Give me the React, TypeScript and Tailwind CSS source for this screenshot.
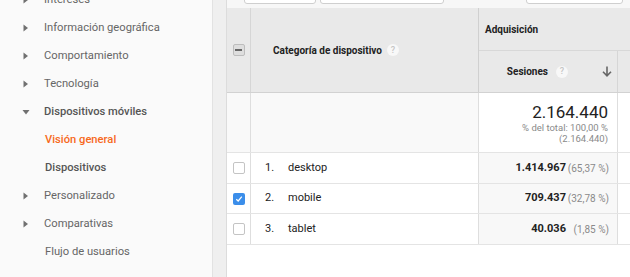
import type React from "react";

const navItems: Array<{ label: string; kind: "closed" | "open" | "sub" | "active" | "plain" }> = [
  { label: "Intereses", kind: "closed" },
  { label: "Información geográfica", kind: "closed" },
  { label: "Comportamiento", kind: "closed" },
  { label: "Tecnología", kind: "closed" },
  { label: "Dispositivos móviles", kind: "open" },
  { label: "Visión general", kind: "active" },
  { label: "Dispositivos", kind: "sub" },
  { label: "Personalizado", kind: "closed" },
  { label: "Comparativas", kind: "closed" },
  { label: "Flujo de usuarios", kind: "plain" },
];

const rows = [
  { n: "1.", name: "desktop", value: "1.414.967", pct: "(65,37 %)", checked: false, h: "h-[31px]" },
  { n: "2.", name: "mobile", value: "709.437", pct: "(32,78 %)", checked: true, h: "h-[30px]" },
  { n: "3.", name: "tablet", value: "40.036", pct: "(1,85 %)", checked: false, h: "h-[31px]" },
];

const Caret: React.FC<{ open?: boolean }> = ({ open }) => (
  <svg width="8" height="8" viewBox="0 0 8 8" className="text-[#707070]">
    {open ? <path d="M0.5 2 L7.5 2 L4 6.5 Z" fill="currentColor" /> : <path d="M1.5 0.5 L6 4 L1.5 7.5 Z" fill="currentColor" />}
  </svg>
);

const HelpIcon: React.FC = () => (
  <span className="inline-flex h-[12px] w-[12px] items-center justify-center rounded-full bg-[#f8f8f8] text-[9px] font-medium leading-none text-[#c4c4c4]">
    ?
  </span>
);

const Checkbox: React.FC<{ checked?: boolean }> = ({ checked }) =>
  checked ? (
    <span className="flex h-[12px] w-[12px] items-center justify-center rounded-[2px] bg-[#3b8eea]">
      <svg width="8" height="8" viewBox="0 0 8 8">
        <path d="M1.3 4.2 L3.2 6 L6.8 1.6" fill="none" stroke="#fff" strokeWidth="1.2" />
      </svg>
    </span>
  ) : (
    <span className="block h-[12px] w-[12px] rounded-[2px] border border-[#c4c4c4] bg-white" />
  );

export default function App() {
  return (
    <div className="flex h-[277px] w-[630px] overflow-hidden bg-white font-['Roboto','Liberation_Sans',sans-serif]">
      {/* navegación lateral */}
      <aside className="w-[213px] shrink-0 border-r border-[#e2e2e2] bg-[#fafafa]">
        <ul className="-mt-[14px]">
          {navItems.map((item) => (
            <li key={item.label} className="flex h-[28px] items-center">
              <span className="flex w-[44px] justify-end pr-[14px]">
                {item.kind === "closed" && <Caret />}
                {item.kind === "open" && <Caret open />}
              </span>
              <span
                className={`text-[11.2px] ${
                  item.kind === "active"
                    ? "pl-[1px] font-medium text-[#f7691c]"
                    : item.kind === "sub"
                      ? "pl-[1px] font-medium text-[#555]"
                      : item.kind === "open"
                        ? "font-medium text-[#555]"
                        : item.kind === "plain"
                          ? "pl-[1px] text-[#666]"
                          : "text-[#666]"
                }`}
              >
                {item.label}
              </span>
            </li>
          ))}
        </ul>
      </aside>
      <div className="w-[14px] shrink-0 border-r border-[#dcdcdc] bg-[#efefef]" />

      <main className="min-w-0 flex-1 overflow-hidden bg-white">
        {/* barra superior con botones recortados */}
        <div className="flex h-[8px] items-end overflow-hidden bg-[#f7f7f7] pb-[4px]">
          <div className="ml-[17px] h-[20px] w-[72px] shrink-0 rounded-[3px] border border-[#cfcfcf] bg-white" />
          <div className="ml-[4px] h-[20px] w-[124px] shrink-0 rounded-[3px] border border-[#cfcfcf] bg-white" />
          <div className="ml-[82px] h-[20px] w-[97px] shrink-0 rounded-[3px] border border-[#cfcfcf] bg-white" />
        </div>

        {/* cabecera de la tabla */}
        <div className="flex h-[85px] w-[420px] border-b border-[#d2d2d2] bg-[#e9e9e9]">
          <div className="flex w-[24px] shrink-0 items-center justify-center border-r border-[#d6d6d6]">
            <span className="flex h-[12px] w-[12px] items-center justify-center rounded-[2px] border border-[#bdbdbd] bg-[#dedede]">
              <span className="block h-[2px] w-[7px] bg-[#666]" />
            </span>
          </div>
          <div className="flex w-[228px] shrink-0 items-center gap-[5px] border-r border-[#d0d0d0] pl-[22px]">
            <span className="text-[10px] font-bold text-[#222]">Categoría de dispositivo</span>
            <HelpIcon />
          </div>
          <div className="flex min-w-0 flex-1 flex-col">
            <div className="flex h-[43px] items-center border-b border-[#d8d8d8] pl-[6px]">
              <span className="text-[10px] font-bold text-[#222]">Adquisición</span>
            </div>
            <div className="flex flex-1">
              <div className="flex w-[139px] shrink-0 items-center justify-end border-r border-[#d6d6d6] pr-[5px]">
                <span className="text-[10px] font-bold text-[#222]">Sesiones</span>
                <span className="ml-[8px] flex">
                  <HelpIcon />
                </span>
                <svg width="10" height="11" viewBox="0 0 10 11" className="ml-[34px]">
                  <path d="M5 0.5 V9.5 M1 5.8 L5 9.8 L9 5.8" fill="none" stroke="#666" strokeWidth="1.6" />
                </svg>
              </div>
              <div className="flex-1" />
            </div>
          </div>
        </div>

        {/* fila de totales */}
        <div className="flex h-[60px] w-[420px] border-b border-[#e4e4e4]">
          <div className="w-[24px] shrink-0 border-r border-[#dedede] bg-[#f9f9f9]" />
          <div className="w-[228px] shrink-0 border-r border-[#dedede] bg-[#f9f9f9]" />
          <div className="flex w-[139px] shrink-0 flex-col items-end border-r border-[#dedede] bg-white pr-[9px] pt-[9px]">
            <span className="text-[17px] leading-[20px] text-[#222]">2.164.440</span>
            <span className="text-[9.5px] leading-[11px] text-[#8a8a8a]">% del total: 100,00 %</span>
            <span className="text-[9.5px] leading-[11px] text-[#8a8a8a]">(2.164.440)</span>
          </div>
          <div className="flex-1 bg-white" />
        </div>

        {/* filas de datos */}
        {rows.map((r) => (
          <div key={r.name} className={`flex ${r.h} w-[420px] border-b border-[#e4e4e4]`}>
            <div className="flex w-[24px] shrink-0 items-center justify-center border-r border-[#dedede]">
              <Checkbox checked={r.checked} />
            </div>
            <div className="flex w-[228px] shrink-0 items-center border-r border-[#dedede] pl-[14px] text-[11px] text-[#222]">
              <span className="w-[23px]">{r.n}</span>
              <span>{r.name}</span>
            </div>
            <div className="flex w-[139px] shrink-0 items-center justify-end border-r border-[#dedede] bg-[#f8f8f8] pr-[8px]">
              <span className="text-[11px] font-bold text-[#222]">{r.value}</span>
              <span className="w-[43px] text-right text-[10px] text-[#8a8a8a]">{r.pct}</span>
            </div>
            <div className="flex-1" />
          </div>
        ))}
      </main>
    </div>
  );
}
